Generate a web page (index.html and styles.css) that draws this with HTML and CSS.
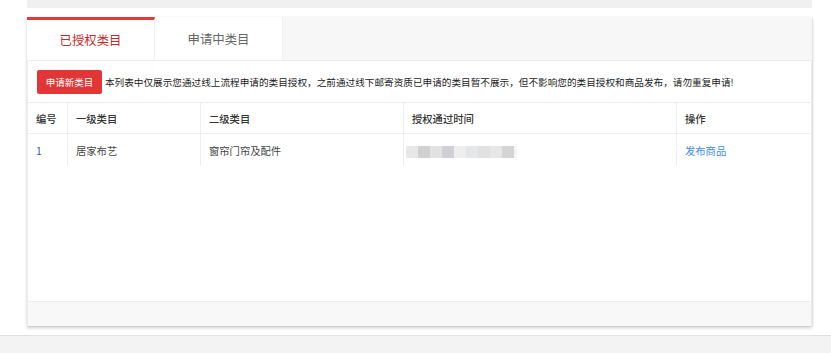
FILE: index.html
```html
<!DOCTYPE html>
<html lang="zh-CN">
<head>
    <meta charset="UTF-8">
    <title>类目授权</title>
    <link rel="stylesheet" href="styles.css">
</head>
<body>
    <div class="topbar"></div>

    <div class="panel">
        <div class="tabs">
            <div class="tab active">已授权类目</div>
            <div class="tab">申请中类目</div>
        </div>

        <div class="content">
            <div class="notice">
                <button class="apply-btn">申请新类目</button>
                <span class="notice-text">本列表中仅展示您通过线上流程申请的类目授权，之前通过线下邮寄资质已申请的类目暂不展示，但不影响您的类目授权和商品发布，请勿重复申请!</span>
            </div>

            <table class="cat-table">
                <thead>
                    <tr>
                        <th class="col-no">编号</th>
                        <th class="col-l1">一级类目</th>
                        <th class="col-l2">二级类目</th>
                        <th class="col-time">授权通过时间</th>
                        <th>操作</th>
                    </tr>
                </thead>
                <tbody>
                    <tr>
                        <td class="num">1</td>
                        <td>居家布艺</td>
                        <td>窗帘门帘及配件</td>
                        <td><span class="blurred"></span></td>
                        <td><a href="#" class="link">发布商品</a></td>
                    </tr>
                </tbody>
            </table>
        </div>

        <div class="panel-foot"></div>
    </div>

    <div class="pagebar"></div>
</body>
</html>
```

FILE: styles.css
```css
body {
    margin: 0;
    background: #fff;
    font-family: "Noto Sans CJK SC", "Noto Sans", sans-serif;
    color: #333;
}
.topbar {
    margin-left: 27px;
    width: 785px;
    height: 8px;
    background: #f0f0f0;
}
.panel {
    margin: 9px 0 0 27px;
    width: 785px;
    background: #fff;
    box-shadow: 0 2px 3px rgba(0, 0, 0, 0.2), 1px 0 2px rgba(0, 0, 0, 0.06);
}
.tabs {
    display: flex;
    height: 43px;
    background: #f7f7f7;
    border-bottom: 1px solid #ebebeb;
}
.tab {
    width: 128px;
    height: 43px;
    box-sizing: border-box;
    background: #fff;
    border-right: 1px solid #f0f0f0;
    display: flex;
    align-items: center;
    justify-content: center;
    font-size: 12.4px;
    color: #666;
}
.tab.active {
    border-top: 3px solid #e23a35;
    color: #c8282a;
}
.content {
    height: 240px;
    border-left: 1px solid #ececec;
    border-right: 1px solid #ececec;
}
.notice {
    display: flex;
    align-items: center;
    height: 42px;
    padding-left: 9px;
    border-bottom: 1px solid #eeeeee;
    box-sizing: border-box;
}
.apply-btn {
    width: 65px;
    height: 24px;
    padding: 0;
    border: none;
    border-radius: 2px;
    background: #e23636;
    color: #fff;
    font-family: inherit;
    font-size: 9.5px;
    margin-right: 3px;
}
.notice-text {
    font-size: 9.65px;
    color: #222;
    white-space: nowrap;
}
.cat-table {
    width: 100%;
    border-collapse: collapse;
    font-size: 10.3px;
}
.cat-table th,
.cat-table td {
    text-align: left;
    padding: 0 0 0 8px;
    border-left: 1px solid #eeeeee;
}
.cat-table th:first-child,
.cat-table td:first-child {
    border-left: none;
}
.cat-table th {
    height: 30px;
    font-weight: 500;
    color: #333;
    border-bottom: 1px solid #eeeeee;
}
.cat-table td {
    height: 32px;
    color: #444;
}
.col-no { width: 31px; }
.col-l1 { width: 124px; }
.col-l2 { width: 194px; }
.col-time { width: 264px; }
.cat-table td.num {
    color: #2a5db0;
}
.blurred {
    display: inline-block;
    width: 111px;
    height: 12px;
    vertical-align: middle;
    margin-left: -6px;
    background: linear-gradient(to right,
        #e7e7e7 0 12px, #d1d1d1 12px 24px, #e2e2e2 24px 36px,
        #cfd0d4 36px 48px, #eeeeee 48px 60px, #e4e6ea 60px 72px,
        #e1e1e1 72px 84px, #e6e6e6 84px 96px, #d4d4d4 96px 108px,
        #f3f6f3 108px 111px);
}
.link {
    color: #3a8ee6;
    text-decoration: none;
}
.panel-foot {
    height: 24px;
    background: #f8f8f8;
    border-top: 1px solid #ececec;
    border-left: 1px solid #ececec;
    border-right: 1px solid #ececec;
}
.pagebar {
    margin-top: 9px;
    height: 30px;
    background: #f3f3f3;
    border-top: 1px solid #dde0e6;
}
```
